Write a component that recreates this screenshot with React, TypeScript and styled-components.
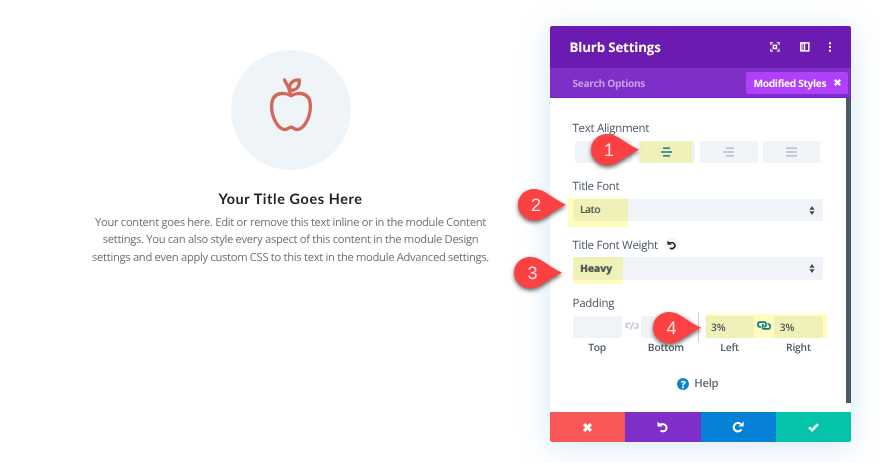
import styled, { createGlobalStyle, css } from "styled-components";
import type { ReactNode } from "react";

const GlobalStyle = createGlobalStyle`
  * {
    box-sizing: border-box;
  }

  body {
    margin: 0;
    background-color: #fff;
    font-family: "Open Sans", sans-serif;
    text-rendering: geometricPrecision;
  }
`;

const Page = styled.div`
  display: flex;
  align-items: flex-start;
  width: 880px;
  height: 463px;
  overflow: hidden;
`;

const Blurb = styled.section`
  display: flex;
  flex-direction: column;
  align-items: center;
  width: 422px;
  margin-left: 79.5px;
  padding-top: 49.5px;
`;

const IconCircle = styled.div`
  display: flex;
  align-items: center;
  justify-content: center;
  width: 120px;
  height: 120px;
  padding-bottom: 9px;
  border-radius: 50%;
  background-color: #eff4f9;
`;

const BlurbTitle = styled.h4`
  margin: 20.5px 0 0;
  color: #222;
  font-family: Lato, sans-serif;
  font-size: 14.4px;
  font-weight: 700;
  letter-spacing: 0.6px;
  line-height: 20px;
`;

const BlurbText = styled.p`
  margin: 4px 0 0;
  color: #707070;
  font-size: 11.2px;
  letter-spacing: -0.3px;
  line-height: 17.3px;
  text-align: center;
  white-space: nowrap;
`;

const Panel = styled.section`
  display: flex;
  flex-direction: column;
  width: 301px;
  height: 416.5px;
  margin: 25.5px 0 0 48.5px;
  border-radius: 2px;
  background-color: #fff;
  box-shadow: 0 4px 32px rgba(43, 135, 218, 0.2);
`;

const Header = styled.header`
  display: flex;
  align-items: center;
  height: 42px;
  padding: 0 19px 0 19.5px;
  border-radius: 2px 2px 0 0;
  background-color: #6c1bb0;
`;

const PanelTitle = styled.h3`
  flex: 1;
  margin: 0;
  color: #fff;
  font-size: 13.3px;
  font-weight: 700;
  letter-spacing: -0.15px;
`;

const HeaderIcons = styled.div`
  display: flex;
  align-items: center;
`;

const SearchBar = styled.div`
  display: flex;
  align-items: center;
  justify-content: space-between;
  height: 30.5px;
  padding: 1px 3.5px 0 22.5px;
  background-color: #7e2fc8;
  border-bottom: 1px solid #741fc0;
  color: #c79fe8;
  font-size: 10.2px;
  font-weight: 700;
  letter-spacing: -0.33px;
`;

const FilterTag = styled.div`
  display: flex;
  align-items: center;
  justify-content: space-between;
  width: 101.5px;
  height: 22.5px;
  padding: 0 7px 0 7.5px;
  border-radius: 2px;
  background-color: #b040fb;
  color: #fff;
`;

const Body = styled.div`
  display: flex;
  flex: 1;
  justify-content: space-between;
`;

const Fields = styled.div`
  display: flex;
  flex-direction: column;
  width: 250.5px;
  margin-left: 22.5px;
  padding-top: 21.5px;
`;

const Scrollbar = styled.div`
  width: 5.5px;
  height: 305px;
  background-color: #4c5866;
`;

const Field = styled.div<{ $height: number }>`
  position: relative;
  height: ${(props) => props.$height}px;
`;

const Label = styled.div`
  display: flex;
  align-items: center;
  gap: 7px;
  height: 18px;
  margin-bottom: 3px;
  color: #4c5866;
  font-size: 11.5px;
  font-weight: 500;
  letter-spacing: -0.28px;
`;

const AlignRow = styled.div`
  display: flex;
  gap: 5px;
  padding-left: 2px;
`;

const control = css`
  height: 22.5px;
  border-radius: 2px;
  background-color: #f0f4f8;
`;

const AlignButton = styled.div`
  ${control}
  display: flex;
  position: relative;
  align-items: center;
  justify-content: center;
  width: 57.7px;
`;

const Select = styled.div<{ $heavy?: boolean }>`
  ${control}
  display: flex;
  position: relative;
  align-items: center;
  justify-content: space-between;
  padding: 1px 8px 0 7.5px;
  color: #4c5866;
  font-size: 10.3px;
  font-weight: ${(props) => (props.$heavy ? 800 : 600)};
  letter-spacing: ${(props) => (props.$heavy ? "-0.25px" : "-0.5px")};
`;

const ResetBadge = styled.span`
  display: flex;
  align-items: center;
  justify-content: center;
  width: 14px;
  height: 14px;
  border-radius: 50%;
  background-color: #f3f6f9;
`;

const PaddingRow = styled.div`
  display: flex;
  position: relative;
  align-items: flex-start;
`;

const PaddingCell = styled.div`
  display: flex;
  flex-direction: column;
  align-items: center;
  width: 49.5px;
  color: #4c5866;
  font-size: 10.3px;
  font-weight: 600;
  letter-spacing: -0.2px;
  line-height: 20px;
`;

const PaddingInput = styled.div`
  ${control}
  width: 100%;
  padding-left: 6px;
  font-size: 10.3px;
  line-height: 24px;
`;

const LinkIcon = styled.div`
  display: flex;
  align-items: center;
  justify-content: center;
  width: 19.7px;
  height: 21px;
`;

const Divider = styled.div`
  width: 1.5px;
  height: 30px;
  margin: -4px 6px 0 7px;
  background-color: #cbd2da;
`;

const Highlight = styled.div<{
  $left: number;
  $top: number;
  $width: number;
  $height: number;
}>`
  position: absolute;
  left: ${(props) => props.$left}px;
  top: ${(props) => props.$top}px;
  width: ${(props) => props.$width}px;
  height: ${(props) => props.$height}px;
  background-color: #fffcbe;
  mix-blend-mode: multiply;
`;

const MarkerBox = styled.div<{ $left: number; $top: number }>`
  position: absolute;
  z-index: 2;
  left: ${(props) => props.$left}px;
  top: ${(props) => props.$top}px;
  width: 48px;
  height: 32px;
  filter: drop-shadow(0 2px 2px rgb(0 0 0 / 0.6));

  svg {
    display: block;
  }
`;

const MarkerNumber = styled.span`
  position: absolute;
  left: 0;
  top: 0;
  width: 37px;
  color: #fbe3e3;
  font-family: "Liberation Sans", sans-serif;
  font-size: 18px;
  line-height: 32px;
  text-align: center;
`;

const Help = styled.div`
  display: flex;
  align-items: center;
  justify-content: center;
  gap: 5px;
  color: #5f6a77;
  font-size: 11.3px;
  font-weight: 600;
  letter-spacing: -0.3px;
  line-height: 16px;
`;

const HelpBadge = styled.span`
  width: 12px;
  height: 12px;
  border-radius: 50%;
  background-color: #0582d5;
  color: #fff;
  font-size: 10px;
  font-weight: 800;
  letter-spacing: 0;
  line-height: 12px;
  text-align: center;
`;

const Footer = styled.footer`
  display: grid;
  grid-template-columns: repeat(4, 1fr);
  height: 30px;
  border-radius: 0 0 2px 2px;
  overflow: hidden;
`;

const FooterButton = styled.div<{ $color: string }>`
  display: flex;
  align-items: center;
  justify-content: center;
  background-color: ${(props) => props.$color};
`;

const AppleIcon = () => (
  <svg width="48" height="60" viewBox="0 0 48 60" fill="none" stroke="#d2685a" strokeWidth="3.3" strokeLinecap="round" strokeLinejoin="round">
    <path d="M24 20.7C21 19 17.5 18 14 18.5C8 19.2 4.6 24 4.6 31.5C4.6 43 11.5 54.5 18 54.5C21 54.5 22 52.2 24 52.2C26 52.2 27 54.5 30 54.5C36.5 54.5 43.4 43 43.4 31.5C43.4 24 40 19.2 34 18.5C30.5 18 27 19 24 20.7Z" />
    <path d="M17.5 5L21.5 12.5L24 20.5" />
    <path d="M23.3 15.2C20.8 9.5 25.5 4.5 32.3 5C33 11.5 29.5 15.8 23.3 15.2Z" />
  </svg>
);

const CloseIcon = ({ size, width }: { size: number; width: number }) => (
  <svg width={size} height={size} viewBox="0 0 10 10" stroke="#fff" strokeWidth={width}>
    <path d="M1.2 1.2L8.8 8.8M8.8 1.2L1.2 8.8" />
  </svg>
);

const UndoIcon = ({ size, color }: { size: number; color: string }) => (
  <svg width={size} height={size} viewBox="0 0 12 12">
    <path d="M2.8 3.3H6.6A3.55 3.55 0 1 1 3.6 9.4" fill="none" stroke={color} strokeWidth="2" />
    <path d="M0.5 0.5V5.6H5.6Z" fill={color} />
  </svg>
);

const RedoIcon = () => (
  <svg width="12" height="12" viewBox="0 0 12 12">
    <path d="M9.5 8.4A4.2 4.2 0 1 1 8.7 3" fill="none" stroke="#fff" strokeWidth="2.1" />
    <path d="M11.6 0.4V5.5H6.5Z" fill="#fff" />
  </svg>
);

const ALIGN_LINES = {
  left: ["M0 1.2H8", "M0 5H11", "M0 8.8H8"],
  center: ["M2 1.2H9", "M0 5H11", "M2 8.8H9"],
  right: ["M3 1.2H11", "M0 5H11", "M3 8.8H11"],
  justify: ["M0 1.2H11", "M0 5H11", "M0 8.8H11"],
};

const AlignIcon = ({ kind }: { kind: keyof typeof ALIGN_LINES }) => (
  <svg width="11" height="10" viewBox="0 0 11 10" stroke={kind === "center" ? "#2b87c8" : "#bcc5d2"} strokeWidth="1.7">
    {ALIGN_LINES[kind].map((d) => (
      <path key={d} d={d} />
    ))}
  </svg>
);

const SelectArrows = () => (
  <svg width="6" height="9" viewBox="0 0 6 9" fill="#3d4855">
    <path d="M3 0L5.6 3.7H0.4Z" />
    <path d="M3 9L5.6 5.3H0.4Z" />
  </svg>
);

const ChainIcon = () => (
  <svg width="14" height="10" viewBox="0 0 14 10" fill="none" stroke="#0582b5" strokeWidth="1.7">
    <path d="M4 5.8H2.4A1.4 1.4 0 0 1 1 4.4V2.6A1.4 1.4 0 0 1 2.4 1.2H7.6A1.4 1.4 0 0 1 9 2.6V4.2A1.4 1.4 0 0 1 7.6 5.6H7" />
    <path d="M10.6 3.2H11.6A1.4 1.4 0 0 1 13 4.6V6.4A1.4 1.4 0 0 1 11.6 7.8H7A1.4 1.4 0 0 1 5.6 6.4V5A1.4 1.4 0 0 1 7 3.6" />
  </svg>
);

const BrokenChainIcon = () => (
  <svg width="14" height="8" viewBox="0 0 14 8" fill="none" stroke="#bcc5d2" strokeWidth="1.5">
    <path d="M5.5 1.5H2.4A1.4 1.4 0 0 0 1 2.9V4.2A1.4 1.4 0 0 0 2.4 5.6H3.6" />
    <path d="M10.5 1.5H11.6A1.4 1.4 0 0 1 13 2.9V4.6A1.4 1.4 0 0 1 11.6 6H8.6" />
    <path d="M8.6 0.5L5.2 7.5" />
  </svg>
);

type MarkerProps = { left: number; top: number; children: ReactNode };

const Marker = ({ left, top, children }: MarkerProps) => (
  <MarkerBox $left={left} $top={top}>
    <svg width="48" height="32" viewBox="0 0 48 32">
      <path d="M48 15.7C40 12 33 7 27.5 3.5C24 1.2 20.5 0 16 0A16 15.7 0 0 0 16 31.4C20.5 31.4 24 30.2 27.5 28C33 24.5 40 19.5 48 15.7Z" fill="#fb4141" />
    </svg>
    <MarkerNumber>{children}</MarkerNumber>
  </MarkerBox>
);

export default function App() {
  return (
    <Page>
      <GlobalStyle />
      <Blurb>
        <IconCircle>
          <AppleIcon />
        </IconCircle>
        <BlurbTitle>Your Title Goes Here</BlurbTitle>
        <BlurbText>
          Your content goes here. Edit or remove this text inline or in the module Content
          <br />
          settings. You can also style every aspect of this content in the module Design
          <br />
          settings and even apply custom CSS to this text in the module Advanced settings.
        </BlurbText>
      </Blurb>

      <Panel>
        <Header>
          <PanelTitle>Blurb Settings</PanelTitle>
          <HeaderIcons>
            <svg width="58" height="10" viewBox="0 0 58 10" fill="none" stroke="#fff" strokeWidth="1.3">
              <path d="M0.7 3V0.7H3M6.8 0.7H9.1V3M9.1 6.8V9.1H6.8M3 9.1H0.7V6.8" strokeOpacity="0.85" />
              <rect x="3.3" y="3.3" width="3.2" height="3.2" strokeWidth="1.5" />
              <rect x="30.8" y="0.9" width="8" height="8" strokeWidth="1.5" />
              <path d="M34.5 1V9" strokeWidth="1.4" />
              <path d="M32.6 2V8" strokeWidth="1" strokeDasharray="1.3 1" />
            </svg>
            <svg width="4" height="10" viewBox="0 0 4 10" fill="#fff">
              <rect x="1" y="0.3" width="2" height="2" />
              <rect x="1" y="4" width="2" height="2" />
              <rect x="1" y="7.7" width="2" height="2" />
            </svg>
          </HeaderIcons>
        </Header>
        <SearchBar>
          Search Options
          <FilterTag>
            Modified Styles
            <CloseIcon size={7} width={3.2} />
          </FilterTag>
        </SearchBar>

        <Body>
          <Fields>
            <Field $height={58}>
              <Label>Text Alignment</Label>
              <AlignRow>
                <AlignButton>
                  <AlignIcon kind="left" />
                </AlignButton>
                <AlignButton>
                  <AlignIcon kind="center" />
                  <Highlight $left={2.5} $top={0} $width={52} $height={22.5} />
                </AlignButton>
                <AlignButton>
                  <AlignIcon kind="right" />
                </AlignButton>
                <AlignButton>
                  <AlignIcon kind="justify" />
                </AlignButton>
              </AlignRow>
              <Marker left={18} top={14.5}>1</Marker>
            </Field>

            <Field $height={58.5}>
              <Label>Title Font</Label>
              <Select>
                Lato
                <SelectArrows />
                <Highlight $left={-4.5} $top={-1} $width={59.5} $height={29} />
              </Select>
              <Marker left={-55} top={11.5}>2</Marker>
            </Field>

            <Field $height={58.5}>
              <Label>
                Title Font Weight
                <ResetBadge>
                  <UndoIcon size={10} color="#222" />
                </ResetBadge>
              </Label>
              <Select $heavy>
                Heavy
                <SelectArrows />
                <Highlight $left={0} $top={0} $width={50.5} $height={26.5} />
              </Select>
              <Marker left={-58.5} top={20.5}>3</Marker>
            </Field>

            <Field $height={81}>
              <Label>Padding</Label>
              <PaddingRow>
                <PaddingCell>
                  <PaddingInput />
                  Top
                </PaddingCell>
                <LinkIcon>
                  <BrokenChainIcon />
                </LinkIcon>
                <PaddingCell>
                  <PaddingInput />
                  Bottom
                </PaddingCell>
                <Divider />
                <PaddingCell>
                  <PaddingInput>3%</PaddingInput>
                  Left
                </PaddingCell>
                <LinkIcon>
                  <ChainIcon />
                </LinkIcon>
                <PaddingCell>
                  <PaddingInput>3%</PaddingInput>
                  Right
                </PaddingCell>
                <Highlight $left={133.5} $top={-2} $width={121} $height={24} />
              </PaddingRow>
              <Marker left={80.5} top={17}>4</Marker>
            </Field>

            <Help>
              <HelpBadge>?</HelpBadge>
              Help
            </Help>
          </Fields>
          <Scrollbar />
        </Body>

        <Footer>
          <FooterButton $color="#f85758">
            <CloseIcon size={9} width={3.4} />
          </FooterButton>
          <FooterButton $color="#7e2fc8">
            <UndoIcon size={12} color="#fff" />
          </FooterButton>
          <FooterButton $color="#0582d5">
            <RedoIcon />
          </FooterButton>
          <FooterButton $color="#04c3aa">
            <svg width="11" height="9" viewBox="0 0 11 9" fill="none" stroke="#fff" strokeWidth="2.6">
              <path d="M1 4.4L4.1 7.2L10 1.2" />
            </svg>
          </FooterButton>
        </Footer>
      </Panel>
    </Page>
  );
}
